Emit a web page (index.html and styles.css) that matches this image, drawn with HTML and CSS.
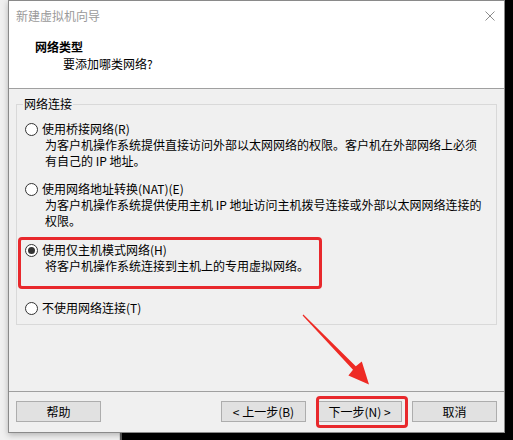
FILE: index.html
```html
<!DOCTYPE html>
<html>
<head>
<meta charset="utf-8">
<link rel="stylesheet" href="styles.css">
</head>
<body>
<div class="desktop">
  <div class="behind"></div>

  <div class="dialog">
    <div class="titlebar">
      <span class="title">新建虚拟机向导</span>
      <svg class="close" width="10" height="10" viewBox="0 0 10 10">
        <path d="M0.5 0.5 L9.5 9.5 M9.5 0.5 L0.5 9.5" stroke="#8c8c8c" stroke-width="1" fill="none"/>
      </svg>
    </div>

    <div class="header">
      <div class="h-title">网络类型</div>
      <div class="h-sub">要添加哪类网络?</div>
    </div>

    <div class="content">
      <fieldset class="group">
        <legend>网络连接</legend>

        <div class="option opt-bridge">
          <div class="choice"><span class="radio"></span><span>使用桥接网络(R)</span></div>
          <div class="desc">为客户机操作系统提供直接访问外部以太网网络的权限。客户机在外部网络上必须<br>有自己的 IP 地址。</div>
        </div>

        <div class="option opt-nat">
          <div class="choice"><span class="radio"></span><span>使用网络地址转换(NAT)(E)</span></div>
          <div class="desc">为客户机操作系统提供使用主机 IP 地址访问主机拨号连接或外部以太网网络连接的<br>权限。</div>
        </div>

        <div class="option opt-host">
          <div class="choice"><span class="radio checked"></span><span>使用仅主机模式网络(H)</span></div>
          <div class="desc">将客户机操作系统连接到主机上的专用虚拟网络。</div>
        </div>

        <div class="option opt-none">
          <div class="choice"><span class="radio"></span><span>不使用网络连接(T)</span></div>
        </div>
      </fieldset>
    </div>

    <div class="footer">
      <button class="btn btn-help">帮助</button>
      <button class="btn btn-back">&lt; 上一步(B)</button>
      <button class="btn btn-next">下一步(N) &gt;</button>
      <button class="btn btn-cancel">取消</button>
    </div>

    <div class="mark mark-option"></div>
    <div class="mark mark-next"></div>
  </div>

  <svg class="arrow" width="513" height="440" viewBox="0 0 513 440">
    <polygon fill="#ee2a24" points="302.6,315.4 303.4,314.6 355.8,366.2 361.8,361.6 369,384.5 348.4,375.4 353,369.8"/>
  </svg>
</div>
</body>
</html>
```

FILE: styles.css
```css
html, body { margin: 0; padding: 0; background-color: #000; }
body { font-family: "Noto Sans CJK SC", "Microsoft YaHei", sans-serif; font-size: 12px; color: #000; }

.desktop { position: relative; width: 513px; height: 440px; overflow: hidden; background-color: #000; }
.behind { position: absolute; left: 0; top: 0; width: 119px; height: 440px; background-color: #f0f0f0; border-right: 1px solid #d6d6d6; box-shadow: 2px 0 0 #5a5a5a; }

.dialog { position: relative; margin-left: 8px; width: 495px; height: 431px; border: 1px solid #8a8a8a; background-color: #f0f0f0; box-shadow: 0 2px 6px rgba(0, 0, 0, 0.25); }

.titlebar { display: flex; align-items: center; justify-content: space-between; height: 29px; padding: 0 9px 0 7px; background-color: #fff; }
.title { color: #9a9a9a; line-height: 16px; }
.close { display: block; }

.header { height: 58px; background-color: #fff; border-bottom: 1px solid #a0a0a0; }
.h-title { padding: 9px 0 0 26px; line-height: 16px; font-weight: bold; }
.h-sub { padding: 1px 0 0 54px; line-height: 16px; }

.content { height: 303px; padding: 7px 7px 0 7px; box-sizing: border-box; border-bottom: 1px solid #a0a0a0; }
.group { margin: 0; padding: 9px 8px 8px 8px; border: 1px solid #d9d9d9; min-width: 0; }
.group legend { margin-left: -2px; padding: 0 1px; line-height: 16px; }

.option { line-height: 16px; white-space: nowrap; }
.opt-nat { margin-top: 12px; }
.opt-host { margin-top: 13px; }
.opt-none { margin-top: 26px; }
.choice { display: flex; align-items: center; }
.desc { padding-left: 20px; }

.radio { position: relative; width: 11px; height: 11px; margin-right: 4px; border: 1px solid #333; border-radius: 50%; background-color: #fff; }
.radio.checked::after { content: ""; position: absolute; left: 2px; top: 2px; width: 7px; height: 7px; border-radius: 50%; background-color: #333; }

.footer { display: flex; height: 39px; padding: 9px 7px 0 7px; box-sizing: border-box; }
.btn { width: 85px; height: 21px; padding: 0; border: 1px solid #adadad; background-color: #e1e1e1; font-family: inherit; font-size: 12px; line-height: 16px; color: #000; }
.btn-back { margin-left: auto; }
.btn-next { margin-left: 11px; }
.btn-cancel { margin-left: 10px; }

.mark { position: absolute; border: 3px solid #e8282c; border-radius: 4px; box-sizing: border-box; }
.mark-option { left: 9px; top: 236px; width: 304px; height: 52px; }
.mark-next { left: 307px; top: 395px; width: 92px; height: 32px; }

.arrow { position: absolute; left: 0; top: 0; pointer-events: none; }
```
